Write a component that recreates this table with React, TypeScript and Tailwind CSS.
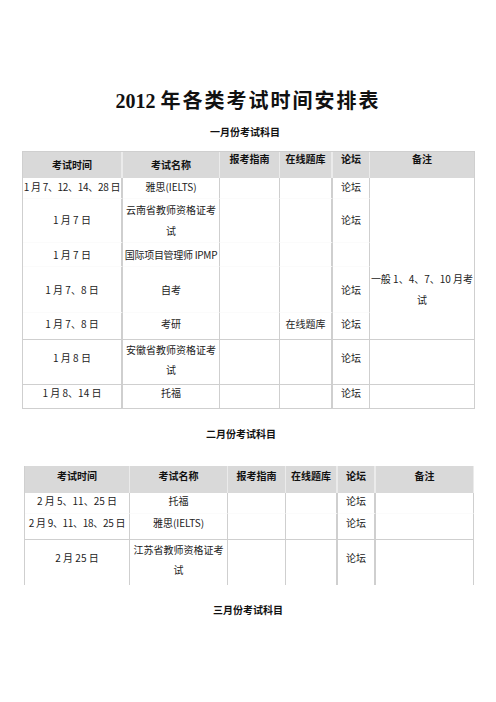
import type { ReactNode } from "react";

const line = "border-[#cfcfcf]";

function Td({
  children,
  className = "",
  rowSpan,
}: {
  children?: ReactNode;
  className?: string;
  rowSpan?: number;
}) {
  return (
    <td
      rowSpan={rowSpan}
      className={`p-0 text-center align-top whitespace-nowrap text-[10px] leading-[14px] text-[#222] ${className}`}
    >
      {children}
    </td>
  );
}

function Th({ children, className = "" }: { children: ReactNode; className?: string }) {
  return (
    <th
      className={`p-0 text-center whitespace-nowrap text-[10px] leading-[14px] font-bold text-[#111] ${className}`}
    >
      {children}
    </th>
  );
}

// bottom borders: near-invisible between grouped rows, grey on real separators
const faint = "border-b border-b-[#fbfbfb]";
const solid = "border-b border-b-[#cfcfcf]";

function JanuaryTable() {
  const c1 = `border-r-2 ${line}`;
  const c = `border-r ${line}`;
  const c4 = `border-r-2 ${line}`;

  return (
    <table className="ml-[22px] w-[452px] table-fixed border-separate border-spacing-0 border-l border-t border-[#cfcfcf]">
      <colgroup>
        <col className="w-[100px]" />
        <col className="w-[97px]" />
        <col className="w-[60px]" />
        <col className="w-[53px]" />
        <col className="w-[37px]" />
        <col className="w-[105px]" />
      </colgroup>
      <thead>
        <tr className="h-[26px] bg-[#d9d9d9]">
          <Th className="align-middle border-r-2 border-[#ebebeb]">考试时间</Th>
          <Th className="align-middle border-r border-[#ebebeb]">考试名称</Th>
          <Th className="align-top border-r border-[#ebebeb]">报考指南</Th>
          <Th className="align-top border-r-2 border-[#ebebeb]">在线题库</Th>
          <Th className="align-top border-r border-[#ebebeb]">论坛</Th>
          <Th className="align-top border-r border-[#cfcfcf]">备注</Th>
        </tr>
      </thead>
      <tbody>
        <tr className="h-[21px]">
          <Td className={`pt-[2px] tracking-[-0.3px] ${c1} ${faint}`}>1 月 7、12、14、28 日</Td>
          <Td className={`pt-[2px] ${c} ${faint}`}>雅思(IELTS)</Td>
          <Td className={`${c} ${faint}`} />
          <Td className={`${c4} ${faint}`} />
          <Td className={`pt-[2px] ${c} ${faint}`}>论坛</Td>
          <Td rowSpan={5} className={`pt-[90px] leading-[21px] ${c} ${solid}`}>
            一般 1、4、7、10 月考
            <br />试
          </Td>
        </tr>
        <tr className="h-[44px]">
          <Td className={`pt-[14px] ${c1} ${faint}`}>1 月 7 日</Td>
          <Td className={`leading-[21px] ${c} ${faint}`}>
            云南省教师资格证考
            <br />试
          </Td>
          <Td className={`${c} ${faint}`} />
          <Td className={`${c4} ${faint}`} />
          <Td className={`pt-[14px] ${c} ${faint}`}>论坛</Td>
        </tr>
        <tr className="h-[24px]">
          <Td className={`pt-[5px] ${c1} ${faint}`}>1 月 7 日</Td>
          <Td className={`pt-[5px] tracking-[-0.3px] ${c} ${faint}`}>国际项目管理师 IPMP</Td>
          <Td className={`${c} ${faint}`} />
          <Td className={`${c4} ${faint}`} />
          <Td className={`${c} ${faint}`} />
        </tr>
        <tr className="h-[46px]">
          <Td className={`pt-[16px] ${c1} ${faint}`}>1 月 7、8 日</Td>
          <Td className={`pt-[16px] ${c} ${faint}`}>自考</Td>
          <Td className={`${c} ${faint}`} />
          <Td className={`${c4} ${faint}`} />
          <Td className={`pt-[16px] ${c} ${faint}`}>论坛</Td>
        </tr>
        <tr className="h-[27px]">
          <Td className={`pt-[4px] ${c1} ${solid}`}>1 月 7、8 日</Td>
          <Td className={`pt-[4px] ${c} ${solid}`}>考研</Td>
          <Td className={`${c} ${solid}`} />
          <Td className={`pt-[4px] ${c4} ${solid}`}>在线题库</Td>
          <Td className={`pt-[4px] ${c} ${solid}`}>论坛</Td>
        </tr>
        <tr className="h-[45px]">
          <Td className={`pt-[11px] ${c1} ${solid}`}>1 月 8 日</Td>
          <Td className={`leading-[20px] ${c} ${solid}`}>
            安徽省教师资格证考
            <br />试
          </Td>
          <Td className={`${c} ${solid}`} />
          <Td className={`${c4} ${solid}`} />
          <Td className={`pt-[11px] ${c} ${solid}`}>论坛</Td>
          <Td className={`${c} ${solid}`} />
        </tr>
        <tr className="h-[24px]">
          <Td className={`pt-[1px] ${c1} ${solid}`}>1 月 8、14 日</Td>
          <Td className={`pt-[1px] ${c} ${solid}`}>托福</Td>
          <Td className={`${c} ${solid}`} />
          <Td className={`${c4} ${solid}`} />
          <Td className={`pt-[1px] ${c} ${solid}`}>论坛</Td>
          <Td className={`${c} ${solid}`} />
        </tr>
      </tbody>
    </table>
  );
}

function FebruaryTable() {
  const c = `border-r ${line}`;
  const c2 = `border-r-2 ${line}`;

  return (
    <table className="ml-[24px] w-[449px] table-fixed border-separate border-spacing-0 border-l border-[#cfcfcf]">
      <colgroup>
        <col className="w-[105px]" />
        <col className="w-[98px]" />
        <col className="w-[58px]" />
        <col className="w-[52px]" />
        <col className="w-[38px]" />
        <col className="w-[98px]" />
      </colgroup>
      <thead>
        <tr className="h-[27px] bg-[#d9d9d9]">
          <Th className="align-top pt-[3px] border-r border-[#ebebeb]">考试时间</Th>
          <Th className="align-top pt-[3px] border-r border-[#ebebeb]">考试名称</Th>
          <Th className="align-top pt-[3px] border-r border-[#ebebeb]">报考指南</Th>
          <Th className="align-top pt-[3px] border-r-2 border-[#ebebeb]">在线题库</Th>
          <Th className="align-top pt-[3px] border-r-2 border-[#ebebeb]">论坛</Th>
          <Th className="align-top pt-[3px] border-r border-[#ebebeb]">备注</Th>
        </tr>
      </thead>
      <tbody>
        <tr className="h-[21px]">
          <Td className={`pt-[1px] ${c} ${faint}`}>2 月 5、11、25 日</Td>
          <Td className={`pt-[1px] ${c} ${faint}`}>托福</Td>
          <Td className={`${c} ${faint}`} />
          <Td className={`${c2} ${faint}`} />
          <Td className={`pt-[1px] ${c2} ${faint}`}>论坛</Td>
          <Td className={`${c} ${faint}`} />
        </tr>
        <tr className="h-[26px]">
          <Td className={`pt-[2px] tracking-[-0.3px] ${c} ${solid}`}>2 月 9、11、18、25 日</Td>
          <Td className={`pt-[2px] ${c} ${solid}`}>雅思(IELTS)</Td>
          <Td className={`${c} ${solid}`} />
          <Td className={`${c2} ${solid}`} />
          <Td className={`pt-[2px] ${c2} ${solid}`}>论坛</Td>
          <Td className={`${c} ${solid}`} />
        </tr>
        <tr className="h-[45px]">
          <Td className={`pt-[11px] ${c}`}>2 月 25 日</Td>
          <Td className={`leading-[20px] ${c}`}>
            江苏省教师资格证考
            <br />试
          </Td>
          <Td className={c} />
          <Td className={c2} />
          <Td className={`pt-[11px] ${c2}`}>论坛</Td>
          <Td className={c} />
        </tr>
      </tbody>
    </table>
  );
}

export default function App() {
  return (
    <div className="min-h-[702px] w-[496px] bg-white pt-[88px] font-['Noto_Sans_CJK_SC',sans-serif] text-[#111]">
      <h1 className="h-6 text-center text-[20px] leading-6 font-bold">
        <span className="font-['Liberation_Serif','Noto_Sans_CJK_SC',serif]">2012 </span>
        <span className="tracking-[2px]">年各类考试时间安排表</span>
      </h1>

      <p className="mt-3 pr-[6px] text-center text-[10px] leading-4 font-bold">一月份考试科目</p>
      <div className="mt-[11px]">
        <JanuaryTable />
      </div>

      <p className="mt-[17px] pr-[14px] text-center text-[10px] leading-4 font-bold">二月份考试科目</p>
      <div className="mt-6">
        <FebruaryTable />
      </div>

      <p className="mt-[17px] text-center text-[10px] leading-4 font-bold">三月份考试科目</p>
    </div>
  );
}
